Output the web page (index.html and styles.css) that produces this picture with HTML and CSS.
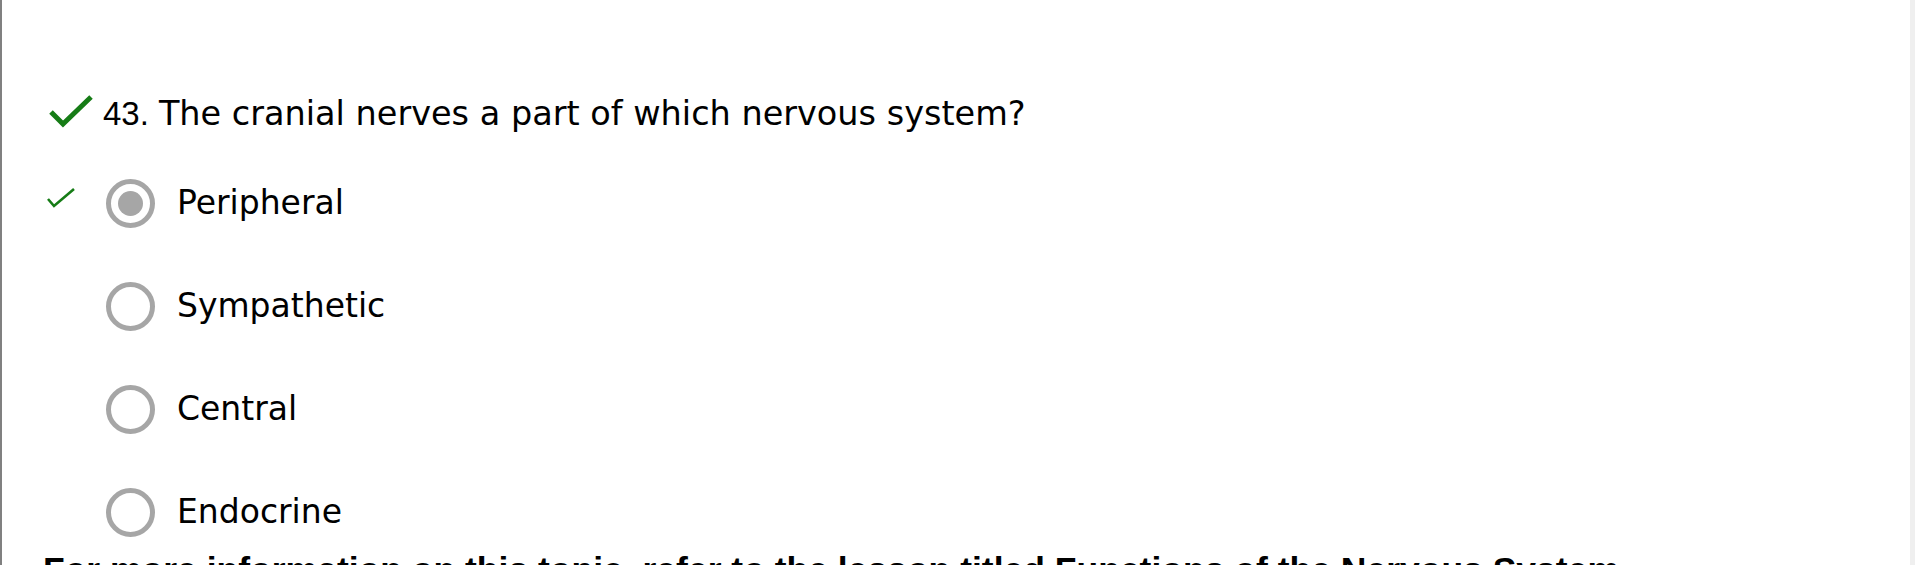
FILE: index.html
```html
<!DOCTYPE html>
<html lang="en">
<head>
    <meta charset="UTF-8">
    <title>Quiz Review</title>
    <link rel="stylesheet" href="styles.css">
</head>
<body>
    <div class="page">
        <div class="quiz">
            <div class="question">
                <svg class="mark-big" width="44" height="34" viewBox="0 0 44 34">
                    <path d="M2 17 L14 29 L42 2" fill="none" stroke="#167c16" stroke-width="5"/>
                </svg>
                <span class="num">43.</span>
                <span class="text">The cranial nerves a part of which nervous system?</span>
            </div>

            <div class="options">
                <div class="option">
                    <span class="mark">
                        <svg width="30" height="22" viewBox="0 0 30 22">
                            <path d="M2 12 L8 19 L28 2" fill="none" stroke="#167c16" stroke-width="2.6"/>
                        </svg>
                    </span>
                    <span class="radio checked"></span>
                    <span class="label">Peripheral</span>
                </div>
                <div class="option">
                    <span class="mark"></span>
                    <span class="radio"></span>
                    <span class="label">Sympathetic</span>
                </div>
                <div class="option">
                    <span class="mark"></span>
                    <span class="radio"></span>
                    <span class="label">Central</span>
                </div>
                <div class="option">
                    <span class="mark"></span>
                    <span class="radio"></span>
                    <span class="label">Endocrine</span>
                </div>
            </div>

            <p class="more">For more information on this topic, refer to the lesson titled Functions of the Nervous System.</p>
        </div>
        <div class="edge"></div>
    </div>
</body>
</html>
```

FILE: styles.css
```css
html, body {
    margin: 0;
    height: 100%;
    overflow: hidden;
    background: #ffffff;
}
.page {
    display: flex;
    height: 100%;
}
.quiz {
    flex: 1;
    border-left: 2px solid #808080;
    padding-top: 94px;
    font-family: 'DejaVu Sans', Verdana, sans-serif;
    font-size: 33px;
    line-height: 40px;
    color: #000000;
}
.edge {
    width: 5px;
    background: #efefef;
}
.question {
    display: flex;
    align-items: center;
    padding-left: 47px;
}
.mark-big {
    margin-right: 10px;
    margin-top: -4px;
}
.num {
    font-family: 'Liberation Sans', Arial, sans-serif;
    margin-right: 10px;
}
.text {
    font-size: 33.5px;
}
.options {
    display: flex;
    flex-direction: column;
    gap: 55px;
    margin-top: 45px;
}
.option {
    display: flex;
    align-items: center;
    height: 48px;
}
.mark {
    width: 30px;
    height: 22px;
    margin-left: 44px;
    margin-right: 30px;
    margin-top: -28px;
}
.radio {
    width: 39px;
    height: 39px;
    border: 5px solid #a6a6a6;
    border-radius: 50%;
    box-sizing: content-box;
    display: flex;
    align-items: center;
    justify-content: center;
    margin-right: 22px;
}
.radio.checked::after {
    content: "";
    width: 25px;
    height: 25px;
    border-radius: 50%;
    background: #a6a6a6;
}
.more {
    margin: 14px 0 0 41px;
    font-family: 'Liberation Sans', Arial, sans-serif;
    font-weight: bold;
    font-size: 35.5px;
    line-height: 40px;
    white-space: nowrap;
}
```
